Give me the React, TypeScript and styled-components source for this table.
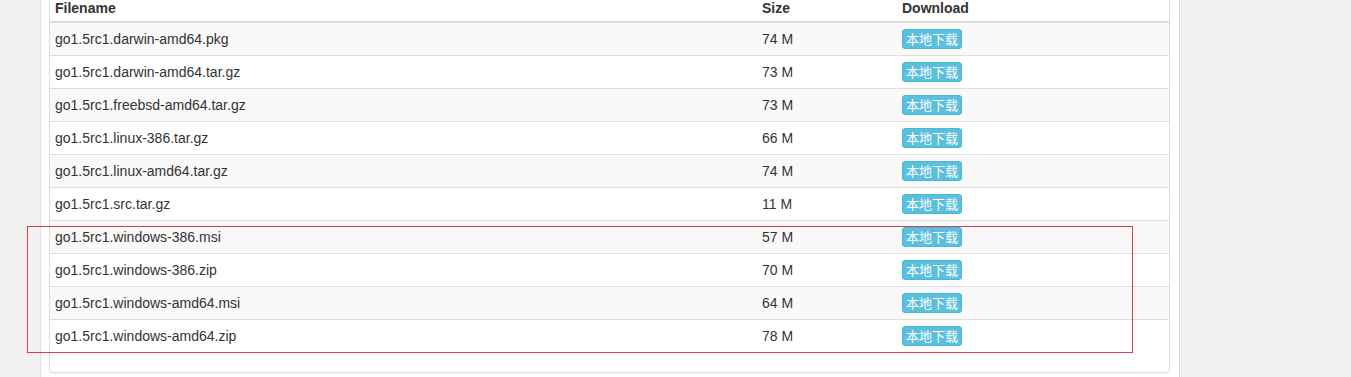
import React from "react";
import styled, { createGlobalStyle } from "styled-components";

const GlobalStyle = createGlobalStyle`
  html, body {
    margin: 0;
    padding: 0;
    background: #f1f1f1;
    overflow: hidden;
  }
  body {
    font-family: "Liberation Sans", Arial, "Noto Sans CJK SC", sans-serif;
    font-size: 14px;
    color: #333;
  }
`;

const Page = styled.div`
  position: relative;
  height: 377px;
  overflow: hidden;
`;

const Column = styled.div`
  box-sizing: border-box;
  margin-left: 40px;
  width: 1140px;
  height: 377px;
  background: #fff;
  border-left: 1px solid #e2e2e2;
  border-right: 1px solid #dcdcdc;
  padding: 0 9px 0 8px;
  overflow: hidden;
`;

const Panel = styled.div`
  margin-top: -8px;
  border: 1px solid #ddd;
  border-radius: 4px;
  background: #fff;
  box-shadow: 0 1px 1px rgba(0, 0, 0, 0.05);
  overflow: hidden;
`;

const Table = styled.table`
  width: 100%;
  border-collapse: collapse;
  border-spacing: 0;
  margin-bottom: 20px;
  table-layout: fixed;
`;

const Th = styled.th<{ $w: number }>`
  box-sizing: border-box;
  width: ${(p) => p.$w}px;
  text-align: left;
  font-weight: bold;
  line-height: 20px;
  padding: 5px 5px 3px;
  border-bottom: 2px solid #ddd;
  color: #333;
`;

const Row = styled.tr<{ $striped: boolean }>`
  background: ${(p) => (p.$striped ? "#f9f9f9" : "#fff")};
`;

const Td = styled.td`
  padding: 6px 5px;
  line-height: 20px;
  border-top: 1px solid #ddd;
  vertical-align: top;
  color: #333;
  white-space: nowrap;
`;

const InfoButton = styled.button`
  box-sizing: border-box;
  display: flex;
  align-items: center;
  justify-content: center;
  width: 60px;
  height: 20px;
  padding: 0 4px;
  margin: 0;
  border: 1px solid #46b8da;
  border-radius: 3px;
  background: #5bc0de;
  color: #fff;
  font-family: "Noto Sans CJK SC", sans-serif;
  font-size: 13px;
  line-height: 18px;
  white-space: nowrap;
  cursor: pointer;
`;

const Highlight = styled.div`
  position: absolute;
  left: 27px;
  top: 226px;
  width: 1106px;
  height: 127px;
  box-sizing: border-box;
  border: 1px solid #d7404a;
  pointer-events: none;
`;

const files: [string, string][] = [
  ["go1.5rc1.darwin-amd64.pkg", "74 M"],
  ["go1.5rc1.darwin-amd64.tar.gz", "73 M"],
  ["go1.5rc1.freebsd-amd64.tar.gz", "73 M"],
  ["go1.5rc1.linux-386.tar.gz", "66 M"],
  ["go1.5rc1.linux-amd64.tar.gz", "74 M"],
  ["go1.5rc1.src.tar.gz", "11 M"],
  ["go1.5rc1.windows-386.msi", "57 M"],
  ["go1.5rc1.windows-386.zip", "70 M"],
  ["go1.5rc1.windows-amd64.msi", "64 M"],
  ["go1.5rc1.windows-amd64.zip", "78 M"],
];

export default function App() {
  return (
    <Page>
      <GlobalStyle />
      <Column>
        <Panel>
          <Table>
            <thead>
              <tr>
                <Th $w={707}>Filename</Th>
                <Th $w={140}>Size</Th>
                <Th $w={272}>Download</Th>
              </tr>
            </thead>
            <tbody>
              {files.map(([name, size], i) => (
                <Row key={name} $striped={i % 2 === 0}>
                  <Td>{name}</Td>
                  <Td>{size}</Td>
                  <Td>
                    <InfoButton>本地下载</InfoButton>
                  </Td>
                </Row>
              ))}
            </tbody>
          </Table>
        </Panel>
      </Column>
      <Highlight />
    </Page>
  );
}
